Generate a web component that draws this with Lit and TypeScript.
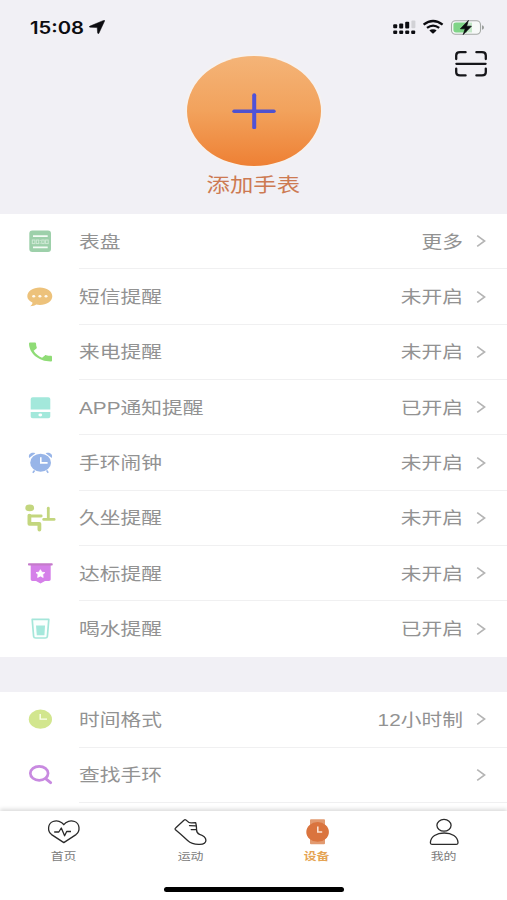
import { LitElement, html, svg, css, nothing, type SVGTemplateResult } from "lit";
import { customElement, property } from "lit/decorators.js";

const icons: Record<string, SVGTemplateResult> = {
  dial: svg`<rect x="9.3" y="3.6" width="21.7" height="21.4" rx="3" fill="#9dd0aa"/>
    <path d="M13 9.2H27.7M13 20.4H27.7" stroke="#f4fbf5" stroke-width="1.8"/>
    <g fill="none" stroke="#cfe9d5" stroke-width="1"><rect x="12.3" y="13" width="2.6" height="3.6"/><rect x="16.3" y="13" width="2.4" height="3.6"/><rect x="21.8" y="13" width="2.4" height="3.6"/><rect x="25.6" y="13" width="2.6" height="3.6"/><path d="M20.2 12.8v1.2M20.2 15.6v1.2"/></g>`,
  sms: svg`<path d="M10.2 24.3C12 23 12.6 21.8 12.4 20.6C9.2 19.2 7.3 16.9 7.3 14.3C7.3 9.4 12.9 5.6 19.8 5.6S32.3 9.4 32.3 14.3S26.7 23 19.8 23C18.6 23 17.3 22.9 16.2 22.6C14.8 23.6 12.6 24.3 10.2 24.3Z" fill="#edc27b"/>
    <g fill="#fffaf0"><ellipse cx="13.7" cy="14.2" rx="1.5" ry="1.3"/><ellipse cx="19.9" cy="14.2" rx="1.5" ry="1.3"/><ellipse cx="26" cy="14.2" rx="1.5" ry="1.3"/></g>`,
  call: svg`<path transform="translate(5.17 2.4) scale(1.278 1.055)" fill="#8fdc76" d="M6.62 10.79c1.44 2.83 3.76 5.14 6.59 6.59l2.2-2.2c.27-.27.67-.36 1.02-.24 1.12.37 2.33.57 3.57.57.55 0 1 .45 1 1V20c0 .55-.45 1-1 1-9.39 0-17-7.61-17-17 0-.55.45-1 1-1h3.5c.55 0 1 .45 1 1 0 1.25.2 2.45.57 3.57.11.35.03.74-.25 1.02l-2.2 2.2z"/>`,
  app: svg`<path d="M12.7 4.3H28.3Q30.3 4.3 30.3 6V16.6H10.7V6Q10.7 4.3 12.7 4.3ZM10.7 18.9H30.3V23.6Q30.3 25.3 28.3 25.3H12.7Q10.7 25.3 10.7 23.6Z" fill="#a3e8db"/>
    <ellipse cx="20.3" cy="22" rx="1.9" ry="1.4" fill="#fff"/>`,
  alarm: svg`<g fill="#98b5e8"><ellipse cx="20.6" cy="14.7" rx="10.4" ry="9"/><path d="M9.2 9.9C7.8 6.4 11.2 3.6 15.4 5.3ZM31.8 9.9C33.2 6.4 29.8 3.6 25.6 5.3Z"/></g>
    <path d="M14.6 22.4L12.8 24.8M26.6 22.4L28.2 24.8" stroke="#98b5e8" stroke-width="1.6"/>
    <path d="M20.8 9.2V14.9H27.6" fill="none" stroke="#fff" stroke-width="1.6"/>`,
  sit: svg`<ellipse cx="9.7" cy="4.9" rx="4.4" ry="3.4" fill="#c3d67e"/>
    <g fill="none" stroke="#c3d67e" stroke-linecap="round" stroke-linejoin="round"><path d="M9.4 12.6V20.8H19.4V26.6" stroke-width="3.8"/><path d="M9.4 13H21.2" stroke-width="2.8"/><path d="M23.6 16.4H34.2" stroke-width="2.6"/><path d="M28.3 5.2V14.5" stroke-width="2.8"/></g>`,
  goal: svg`<path d="M10.7 5H30.7V20.6Q30.7 22 29 22H25L20.5 24.4L16 22H12.4Q10.7 22 10.7 20.6Z" fill="#d580e9"/><rect x="8" y="4.2" width="24.7" height="2.4" rx=".8" fill="#c57acb"/>
    <path d="M20.4 10.7L21.8 13.2L24.8 13.6L22.7 15.6L23.2 18.4L20.4 17.1L17.6 18.4L18.1 15.6L16 13.6L19 13.2Z" fill="#fff" stroke="#fff" stroke-width=".8" stroke-linejoin="round"/>`,
  water: svg`<path d="M12.2 5.4H28.8L27.4 22.3Q27.2 24 25.2 24H15.8Q13.8 24 13.6 22.3Z" fill="#fbfffe" stroke="#a5e6da" stroke-width="1.7" stroke-linejoin="round"/><path d="M16 11.6H25L24.4 21.2H16.8Z" fill="#a5e8dc"/>`,
  clock: svg`<ellipse cx="20.4" cy="14.2" rx="11.6" ry="9.6" fill="#d2e68e"/><path d="M20.2 9V14.1H27" fill="none" stroke="#fbfff0" stroke-width="1.4"/>`,
  find: svg`<ellipse cx="19.2" cy="13.3" rx="8.9" ry="7" fill="none" stroke="#c88ae0" stroke-width="2.7"/><path d="M25.6 18.6L30.6 22.6" stroke="#c88ae0" stroke-width="3" stroke-linecap="round"/>`,
  home: svg`<g fill="none" stroke="#2b2b2b" stroke-width="1.3" stroke-linejoin="round"><path d="M18.8 25.6L6.6 17.6C2 14 2.8 6.4 8 4.5C12 3.1 16.6 4.2 18.8 7.7C21 4.2 25.6 3.1 29.6 4.5C34.8 6.4 35.6 14 31 17.6Z"/><path d="M9.2 15H13.8L16.3 11L19.6 18.8L21.7 14.5H26"/></g>`,
  sport: svg`<g fill="none" stroke="#2b2b2b" stroke-width="1.3" stroke-linejoin="round" stroke-linecap="round"><path d="M3.2 12.4Q2.8 11.6 3.6 11L12.2 3Q13 2.2 13.8 2.9Q16.4 5.9 19.4 5.8L23.7 5.7Q24.6 9 24.6 13Q24.6 16.2 27.6 17.4C30.6 18.4 33.9 20.2 33.9 23.2C33.9 26 31 27.3 27.8 27.3C22 27.6 18.6 26.2 15.6 23.4Q9 17.2 3.2 12.4Z"/><path d="M17.5 8.6L23.8 8.9M19.2 12.6L24.4 12.6"/></g>`,
  device: svg`<rect x="11" y="2.3" width="15" height="25" rx="1" fill="#e29a70"/><ellipse cx="18.6" cy="14.9" rx="11.3" ry="9.9" fill="#da743e"/><path d="M18.8 9.4V15H23.2" fill="none" stroke="#fbe3d3" stroke-width="1.6"/>`,
  mine: svg`<g fill="none" stroke="#2b2b2b" stroke-width="1.3" stroke-linejoin="round"><ellipse cx="18" cy="8.3" rx="7.1" ry="5.9"/><path d="M6.2 27.3Q4.3 27.3 4.4 25.4C4.8 19.6 10.4 16 18.2 16S31.6 19.6 32 25.4Q32.1 27.3 30.2 27.3Z"/></g>`,
};

interface Item {
  icon: string;
  label: string;
  value?: string;
}

const reminders: Item[] = [
  { icon: "dial", label: "表盘", value: "更多" },
  { icon: "sms", label: "短信提醒", value: "未开启" },
  { icon: "call", label: "来电提醒", value: "未开启" },
  { icon: "app", label: "APP通知提醒", value: "已开启" },
  { icon: "alarm", label: "手环闹钟", value: "未开启" },
  { icon: "sit", label: "久坐提醒", value: "未开启" },
  { icon: "goal", label: "达标提醒", value: "未开启" },
  { icon: "water", label: "喝水提醒", value: "已开启" },
];

const settings: Item[] = [
  { icon: "clock", label: "时间格式", value: "12小时制" },
  { icon: "find", label: "查找手环" },
];

const tabs: Item[] = [
  { icon: "home", label: "首页" },
  { icon: "sport", label: "运动" },
  { icon: "device", label: "设备" },
  { icon: "mine", label: "我的" },
];

@customElement("setting-row")
class SettingRow extends LitElement {
  @property({ attribute: false }) item!: Item;

  static styles = css`
    :host { display: flex; height: 55.35px; box-sizing: border-box; padding-left: 20px; color: #929292; }
    .icon { width: 40px; height: 30px; margin: 12.7px 19px 0 0; flex: none; }
    .body { flex: 1; display: flex; align-items: center; justify-content: space-between; padding-right: 21px; border-bottom: 1px solid #f0f0f1; }
    .text { font-size: 17px; line-height: 24px; padding-top: 3px; white-space: nowrap; transform: scaleX(1.22); transform-origin: left center; }
    .end { display: flex; align-items: center; gap: 13.5px; }
    .end .text { transform-origin: right center; }
    .chevron { width: 10px; height: 14px; }
    :host([last]) .body { border-color: transparent; }
  `;

  render() {
    const { icon, label, value } = this.item;
    return html`
      <svg class="icon" viewBox="0 0 40 30">${icons[icon]}</svg>
      <div class="body">
        <span class="text">${label}</span>
        <div class="end">
          ${value ? html`<span class="text">${value}</span>` : nothing}
          <svg class="chevron" viewBox="0 0 10 14"><path d="M1.2 1.6L8.6 7L1.2 12.4" fill="none" stroke="#b4b4b4" stroke-width="1.6"/></svg>
        </div>
      </div>`;
  }
}

@customElement("app-root")
class AppRoot extends LitElement {
  static styles = css`
    :host { display: flex; flex-direction: column; width: 507px; height: 900px; overflow: hidden; background: #f1f0f5; font-family: "Liberation Sans", "Noto Sans CJK SC", sans-serif; }
    .status { display: flex; align-items: center; height: 54px; box-sizing: border-box; padding: 0 22px 0 30px; flex: none; }
    .time { font: 600 17px/20px Inter, sans-serif; width: 59px; padding-top: 1px; color: #0c0c10; }
    .time span { display: inline-block; transform: scaleX(1.19); transform-origin: left; }
    .arrow { width: 16px; height: 14px; }
    .system { margin-left: auto; width: 93px; height: 18px; }
    .hero { position: relative; height: 160px; flex: none; display: flex; flex-direction: column; align-items: center; padding-top: 2px; box-sizing: border-box; }
    .scan { position: absolute; right: 19px; top: -4px; width: 34px; height: 28px; }
    .add { width: 134px; height: 110px; border-radius: 50%; background: linear-gradient(#f4b478, #f2a25c 50%, #ee8034); display: flex; align-items: center; justify-content: center; box-shadow: 0 0 2px 1px #fbf3ea; }
    .plus { width: 44px; height: 36px; }
    .title { margin-top: 6px; font-size: 19.2px; line-height: 28px; color: #cd7a52; transform: scaleX(1.22); }
    .group { background: #fff; flex: none; }
    .second { margin-top: 35.5px; flex: 1; min-height: 0; overflow: hidden; }
    .tabs { position: relative; flex: none; height: 89px; background: #fff; box-shadow: 0 -2px 4px rgba(0, 0, 0, .14); display: grid; grid-template-columns: repeat(4, 1fr); align-content: start; padding-top: 6px; box-sizing: border-box; }
    .tab { display: flex; flex-direction: column; align-items: center; color: #7c7c7c; }
    .tab svg { width: 36px; height: 30px; }
    .tab span { font-size: 10.6px; line-height: 14px; margin-top: 2px; transform: scaleX(1.22); }
    .tab.active { color: #e5a455; font-weight: 700; }
    .indicator { position: absolute; left: 164px; bottom: 8px; width: 180px; height: 5.4px; border-radius: 3px; background: #000; }
  `;

  render() {
    return html`
      <div class="status">
        <div class="time"><span>15:08</span></div>
        <svg class="arrow" viewBox="0 0 16 14"><path d="M15.8.6L9.8 13.4Q9 14 8.6 12.9L8.2 7.6L1 7.2Q-.4 6.8 1 6.1L14.6.4Q15.8 0 15.8.6Z" fill="#0c0c10" stroke="#0c0c10" stroke-width=".5"/></svg>
        <svg class="system" viewBox="0 0 93 18">
          <g fill="#0c0c10">
            <rect x="1.2" y="6.3" width="4" height="4" rx="1"/><rect x="7.2" y="5.4" width="4" height="5" rx="1"/><rect x="13.2" y="3.8" width="4" height="6.6" rx="1"/><rect x="19.4" y="2.6" width="4" height="7.6" rx="1" fill="#d2d2d6"/>
            <rect x="1.2" y="12.6" width="4" height="3.4" rx="1"/><rect x="7.2" y="12.6" width="4" height="3.4" rx="1"/><rect x="13.2" y="12.6" width="4" height="3.4" rx="1"/><rect x="19.2" y="12.6" width="4" height="3.4" rx="1"/>
            <path d="M41 11.2Q43.4 11.2 44.6 12.6L41.7 15.3Q41 15.8 40.3 15.3L37.4 12.6Q38.6 11.2 41 11.2Z"/>
          </g>
          <path d="M31.6 6.7Q41.1-.7 50.6 6.7M35 9.9Q41.1 5.4 47.2 9.9" fill="none" stroke="#0c0c10" stroke-width="2.3"/>
          <rect x="59.5" y="2.8" width="29" height="13.4" rx="4" fill="#f7f9f8" stroke="#a5a9a6" stroke-width="1.1"/>
          <path d="M74 4.6H80V14.4H74Z" fill="#c4e8c8"/>
          <path d="M64 4.6H75V14.4H64Q61.4 14.4 61.4 12V7Q61.4 4.6 64 4.6Z" fill="#7fd487"/>
          <path d="M90 7.3Q92 7.8 92 9.5T90 11.7Z" fill="#9a9e9b"/>
          <path d="M76.4 2.4L68.4 10.8H73.2L71.2 16.6L79.4 8.2H74.6Z" fill="#0c0c10" stroke="#0c0c10" stroke-width=".7" stroke-linejoin="round"/>
        </svg>
      </div>
      <div class="hero">
        <svg class="scan" viewBox="0 0 34 28"><path d="M2.2 9V5.4Q2.2 2.2 6 2.2H11.6M22.4 2.2H28Q31.8 2.2 31.8 5.4V9M31.8 18.6V22Q31.8 25.4 28 25.4H22.4M11.6 25.4H6Q2.2 25.4 2.2 22V18.6M2.4 13.8H31.6" fill="none" stroke="#16161a" stroke-width="2.3" stroke-linecap="round"/></svg>
        <div class="add"><svg class="plus" viewBox="0 0 44 36"><path d="M2 18.3H42" stroke="#4f52d0" stroke-width="3.4" stroke-linecap="round"/><path d="M22.2 2.3V34.3" stroke="#4f52d8" stroke-width="4" stroke-linecap="round"/></svg></div>
        <div class="title">添加手表</div>
      </div>
      <div class="group">
        ${reminders.map((item, i) => html`<setting-row .item=${item} ?last=${i === reminders.length - 1}></setting-row>`)}
      </div>
      <div class="group second">
        ${settings.map((item) => html`<setting-row .item=${item}></setting-row>`)}
      </div>
      <div class="tabs">
        ${tabs.map((tab) => html`<div class="tab ${tab.icon === "device" ? "active" : ""}"><svg viewBox="0 0 36 30">${icons[tab.icon]}</svg><span>${tab.label}</span></div>`)}
        <div class="indicator"></div>
      </div>`;
  }
}
